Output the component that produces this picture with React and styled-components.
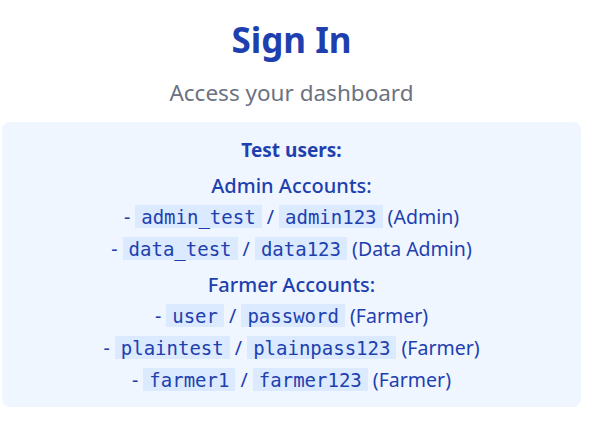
import styled, { createGlobalStyle } from "styled-components";

const GlobalStyle = createGlobalStyle`
  html, body {
    margin: 0;
    padding: 0;
    background: #ffffff;
  }
  body {
    font-family: "Noto Sans", "Open Sans", sans-serif;
  }
`;

const Page = styled.div`
  width: 579px;
  margin-left: 2px;
  padding-top: 20px;
  display: flex;
  flex-direction: column;
  align-items: center;
`;

const Title = styled.h1`
  margin: 0;
  font-size: 35px;
  line-height: 40px;
  font-weight: 700;
  color: #1e40af;
`;

const Subtitle = styled.p`
  margin: 17px 0 0;
  font-size: 22.5px;
  line-height: 32px;
  color: #6b7280;
`;

const InfoBox = styled.div`
  align-self: stretch;
  margin-top: 13px;
  padding: 14px 16px 11px;
  background: #eff6ff;
  border-radius: 8px;
  display: flex;
  flex-direction: column;
  align-items: center;
  color: #1e40af;
`;

const BoxHeading = styled.div`
  font-size: 19px;
  line-height: 28px;
  font-weight: 700;
`;

const Group = styled.div`
  margin-top: ${(p) => p.$gap}px;
  display: flex;
  flex-direction: column;
  align-items: center;
`;

const GroupTitle = styled.div`
  font-size: 20px;
  line-height: 30px;
  font-weight: 500;
`;

const Row = styled.div`
  font-size: 19.5px;
  line-height: 32px;
  text-align: center;
  white-space: nowrap;
`;

const Code = styled.code`
  font-family: "DejaVu Sans Mono", "Liberation Mono", monospace;
  font-size: 19px;
  padding: 1px 6px 0;
  background: #dbeafe;
`;

const groups = [
  {
    title: "Admin Accounts:",
    gap: 7,
    users: [
      ["admin_test", "admin123", "Admin"],
      ["data_test", "data123", "Data Admin"],
    ],
  },
  {
    title: "Farmer Accounts:",
    gap: 5,
    users: [
      ["user", "password", "Farmer"],
      ["plaintest", "plainpass123", "Farmer"],
      ["farmer1", "farmer123", "Farmer"],
    ],
  },
];

export default function App() {
  return (
    <>
      <GlobalStyle />
      <Page>
        <Title>Sign In</Title>
        <Subtitle>Access your dashboard</Subtitle>
        <InfoBox>
          <BoxHeading>Test users:</BoxHeading>
          {groups.map((g) => (
            <Group key={g.title} $gap={g.gap}>
              <GroupTitle>{g.title}</GroupTitle>
              {g.users.map(([login, pass, role]) => (
                <Row key={login}>
                  - <Code>{login}</Code> / <Code>{pass}</Code> ({role})
                </Row>
              ))}
            </Group>
          ))}
        </InfoBox>
      </Page>
    </>
  );
}
